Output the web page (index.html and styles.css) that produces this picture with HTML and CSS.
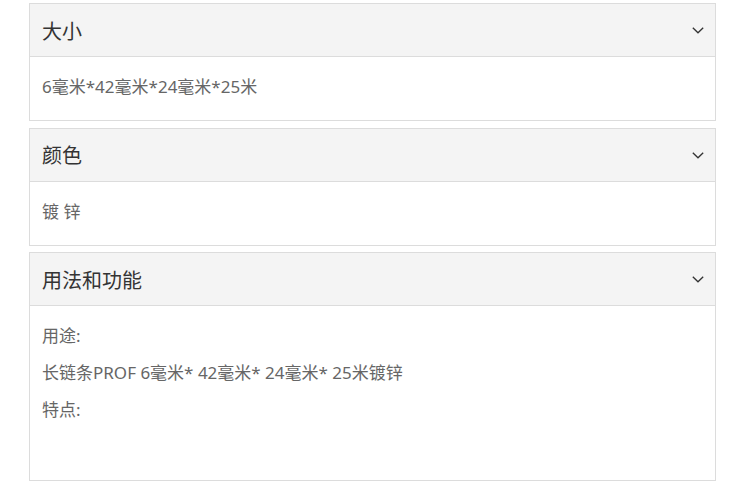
FILE: index.html
```html
<!DOCTYPE html>
<html lang="zh">
<head>
<meta charset="utf-8">
<link rel="stylesheet" href="styles.css">
</head>
<body>
<div class="list">
  <section class="panel">
    <div class="head"><span class="title">大小</span><svg class="chev" viewBox="0 0 12 7" width="12" height="7"><path d="M0.8 0.8 L6 5.8 L11.2 0.8" fill="none" stroke="#333" stroke-width="1.3"/></svg></div>
    <div class="body"><p>6毫米*42毫米*24毫米*25米</p></div>
  </section>
  <section class="panel">
    <div class="head"><span class="title">颜色</span><svg class="chev" viewBox="0 0 12 7" width="12" height="7"><path d="M0.8 0.8 L6 5.8 L11.2 0.8" fill="none" stroke="#333" stroke-width="1.3"/></svg></div>
    <div class="body"><p>镀 锌</p></div>
  </section>
  <section class="panel">
    <div class="head"><span class="title">用法和功能</span><svg class="chev" viewBox="0 0 12 7" width="12" height="7"><path d="M0.8 0.8 L6 5.8 L11.2 0.8" fill="none" stroke="#333" stroke-width="1.3"/></svg></div>
    <div class="body">
      <p>用途:</p>
      <p>长链条PROF 6毫米* 42毫米* 24毫米* 25米镀锌</p>
      <p>特点:</p>
      <p>&nbsp;</p>
    </div>
  </section>
</div>
</body>
</html>
```
FILE: styles.css
```css
html, body {
  margin: 0;
  padding: 0;
  background: #fff;
}
body {
  font-family: "Noto Sans", "Noto Sans CJK SC", sans-serif;
}
.list {
  width: 687px;
  margin: 3px 0 0 29px;
  display: flex;
  flex-direction: column;
  gap: 6.5px;
}
.panel {
  border: 1px solid #dcdcdc;
}
.head {
  height: 52px;
  background: #f4f4f4;
  border-bottom: 1px solid #dcdcdc;
  display: flex;
  align-items: center;
  justify-content: space-between;
  padding: 0 11px 0 12px;
}
.title {
  font-size: 20px;
  color: #333;
}
.chev {
  display: block;
  margin-top: 1px;
}
.body {
  padding: 18px 12px 8px;
  color: #666;
  font-size: 17px;
}
.body p {
  margin: 0 0 13px;
  line-height: 24px;
}
```
